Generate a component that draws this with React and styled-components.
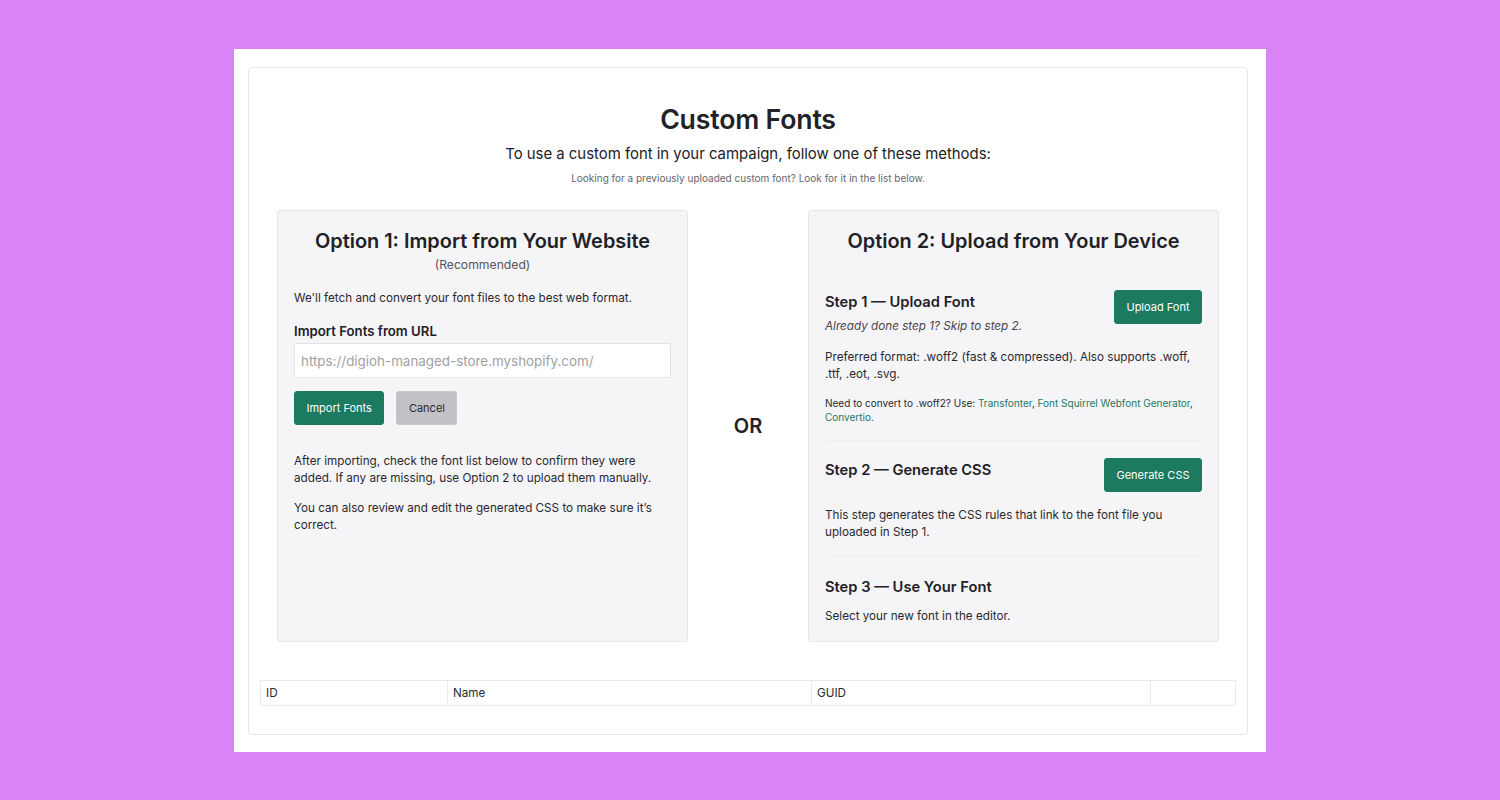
import React from 'react';
import styled, { createGlobalStyle } from 'styled-components';

const GlobalStyle = createGlobalStyle`
  html, body {
    margin: 0;
    padding: 0;
    height: 800px;
    overflow: hidden;
    background: #d983f6;
    font-family: Inter, "Liberation Sans", sans-serif;
    color: #212126;
  }
  * { box-sizing: border-box; }
`;

const Page = styled.div`
  width: 1500px;
  height: 800px;
  padding: 49px 234px 48px;
`;

const Frame = styled.div`
  height: 703px;
  background: #ffffff;
  padding: 18px 18px 17px 14px;
`;

const Card = styled.div`
  height: 668px;
  border: 1px solid #e8e7ea;
  border-radius: 4px;
  padding: 34px 11px 0;
`;

const Header = styled.div`
  text-align: center;
  margin-bottom: 25px;
`;

const Title = styled.h1`
  margin: 0;
  font-size: 26.7px;
  line-height: 34px;
  font-weight: 600;
  letter-spacing: -0.2px;
`;

const Subtitle = styled.p`
  margin: 8px 0 0;
  font-size: 14.9px;
  line-height: 20px;
`;

const Hint = styled.p`
  margin: 7px 0 0;
  font-size: 10px;
  line-height: 14px;
  color: #66666c;
`;

const Options = styled.div`
  display: flex;
  align-items: stretch;
  padding: 0 17px;
`;

const Panel = styled.section`
  width: 411px;
  height: 432px;
  flex: none;
  background: #f5f4f7;
  border: 1px solid #e6e5e9;
  border-radius: 3px;
  padding: 17px 16px 0;
`;

const Or = styled.div`
  flex: 1;
  display: flex;
  align-items: center;
  justify-content: center;
  font-size: 20px;
  font-weight: 600;
`;

const PanelTitle = styled.h2`
  margin: 0;
  text-align: center;
  font-size: 19.9px;
  line-height: 27px;
  font-weight: 600;
`;

const Recommended = styled.div`
  margin-top: 1px;
  text-align: center;
  font-size: 12.2px;
  line-height: 18px;
  color: #55555b;
`;

const Text = styled.p`
  margin: ${(props) => props.$margin || '0'};
  font-size: 11.7px;
  line-height: 17px;
  color: #2a2a2f;
`;

const Label = styled.label`
  display: block;
  margin-top: 15px;
  font-size: 13.2px;
  line-height: 18px;
  font-weight: 600;
`;

const UrlInput = styled.input`
  display: block;
  width: 377px;
  height: 35px;
  margin-top: 3px;
  padding: 0 6px;
  border: 1px solid #e3e2e6;
  border-radius: 2px;
  background: #ffffff;
  font-family: inherit;
  font-size: 13.4px;
  outline: none;

  &::placeholder {
    color: #a0a0a5;
    opacity: 1;
  }
`;

const ButtonRow = styled.div`
  display: flex;
  gap: 12px;
  margin: 13px 0 28px;
`;

const Button = styled.button`
  height: 34px;
  padding: 0 11.5px;
  border: 1px solid ${(props) => (props.$muted ? '#c8c7cb' : '#1b7a60')};
  border-radius: 3px;
  background: ${(props) => (props.$muted ? '#c2c1c5' : '#1b7a60')};
  color: ${(props) => (props.$muted ? '#2a2a2f' : '#ffffff')};
  font-family: inherit;
  font-size: 11px;
  font-weight: 400;
  flex: none;
`;

const StepHead = styled.div`
  display: flex;
  align-items: flex-start;
  justify-content: space-between;
`;

const StepTitle = styled.h3`
  margin: 0;
  padding-top: 2px;
  font-size: 14.7px;
  line-height: 20px;
  font-weight: 600;
`;

const Step = styled.div`
  padding: ${(props) => props.$padding};
  border-bottom: ${(props) => (props.$last ? 'none' : '1px solid #eeedf0')};
`;

const Skip = styled.div`
  margin-top: -6px;
  font-size: 11.7px;
  line-height: 17px;
  font-style: italic;
  color: #45454a;
`;

const Small = styled.p`
  margin: 13px 0 0;
  font-size: 10px;
  line-height: 14px;
  color: #2a2a2f;
`;

const GreenLink = styled.a`
  color: #1b7a60;
`;

const FontTable = styled.table`
  width: 975px;
  margin: 38px 0 0;
  border-collapse: collapse;
  table-layout: fixed;
`;

const Th = styled.th`
  width: ${(props) => props.$width}px;
  height: 25px;
  padding: 0 5px;
  border: 1px solid #eae9ec;
  text-align: left;
  font-size: 11.7px;
  font-weight: 400;
  color: #2a2a2f;
`;

const App = () => {
  return (
    <Page>
      <GlobalStyle />
      <Frame>
        <Card>
          <Header>
            <Title>Custom Fonts</Title>
            <Subtitle>To use a custom font in your campaign, follow one of these methods:</Subtitle>
            <Hint>Looking for a previously uploaded custom font? Look for it in the list below.</Hint>
          </Header>

          <Options>
            <Panel>
              <PanelTitle>Option 1: Import from Your Website</PanelTitle>
              <Recommended>(Recommended)</Recommended>
              <Text $margin="16px 0 0">We'll fetch and convert your font files to the best web format.</Text>
              <Label>Import Fonts from URL</Label>
              <UrlInput placeholder="https://digioh-managed-store.myshopify.com/" />
              <ButtonRow>
                <Button>Import Fonts</Button>
                <Button $muted>Cancel</Button>
              </ButtonRow>
              <Text>
                After importing, check the font list below to confirm they were added. If any are
                missing, use Option 2 to upload them manually.
              </Text>
              <Text $margin="13px 0 0">
                You can also review and edit the generated CSS to make sure it’s correct.
              </Text>
            </Panel>

            <Or>OR</Or>

            <Panel>
              <PanelTitle>Option 2: Upload from Your Device</PanelTitle>
              <Step $padding="35px 0 16px">
                <StepHead>
                  <StepTitle>Step 1 — Upload Font</StepTitle>
                  <Button>Upload Font</Button>
                </StepHead>
                <Skip>Already done step 1? Skip to step 2.</Skip>
                <Text $margin="14px 0 0">
                  Preferred format: .woff2 (fast &amp; compressed). Also supports .woff, .ttf, .eot, .svg.
                </Text>
                <Small>
                  Need to convert to .woff2? Use: <GreenLink>Transfonter</GreenLink>,{' '}
                  <GreenLink>Font Squirrel Webfont Generator</GreenLink>, <GreenLink>Convertio</GreenLink>.
                </Small>
              </Step>
              <Step $padding="17px 0 15px">
                <StepHead>
                  <StepTitle>Step 2 — Generate CSS</StepTitle>
                  <Button>Generate CSS</Button>
                </StepHead>
                <Text $margin="15px 0 0">
                  This step generates the CSS rules that link to the font file you uploaded in Step 1.
                </Text>
              </Step>
              <Step $padding="18px 0 0" $last>
                <StepTitle>Step 3 — Use Your Font</StepTitle>
                <Text $margin="11px 0 0">Select your new font in the editor.</Text>
              </Step>
            </Panel>
          </Options>

          <FontTable>
            <thead>
              <tr>
                <Th $width={187}>ID</Th>
                <Th $width={364}>Name</Th>
                <Th $width={339}>GUID</Th>
                <Th $width={85}></Th>
              </tr>
            </thead>
          </FontTable>
        </Card>
      </Frame>
    </Page>
  );
};

export default App;
